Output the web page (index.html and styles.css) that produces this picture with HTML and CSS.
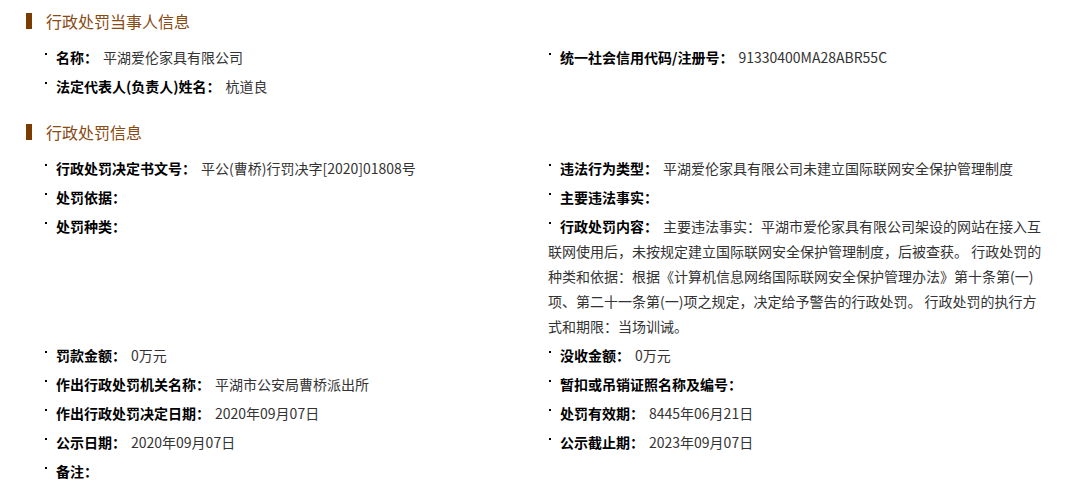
FILE: index.html
```html
<!DOCTYPE html>
<html lang="zh-CN">
<head>
    <meta charset="UTF-8">
    <meta name="viewport" content="width=device-width, initial-scale=1.0">
    <title>行政处罚信息</title>
    <link rel="stylesheet" href="styles.css">
</head>
<body>
    <div class="section">
        <h3 class="section-title">行政处罚当事人信息</h3>
        <div class="info-grid">
            <div class="item"><span class="label">名称：</span><span class="value">平湖爱伦家具有限公司</span></div>
            <div class="item"><span class="label">统一社会信用代码/注册号：</span><span class="value">91330400MA28ABR55C</span></div>
            <div class="item"><span class="label">法定代表人(负责人)姓名：</span><span class="value">杭道良</span></div>
        </div>
    </div>

    <div class="section">
        <h3 class="section-title">行政处罚信息</h3>
        <div class="info-grid">
            <div class="item"><span class="label">行政处罚决定书文号：</span><span class="value">平公(曹桥)行罚决字[2020]01808号</span></div>
            <div class="item"><span class="label">违法行为类型：</span><span class="value">平湖爱伦家具有限公司未建立国际联网安全保护管理制度</span></div>
            <div class="item"><span class="label">处罚依据：</span><span class="value"></span></div>
            <div class="item"><span class="label">主要违法事实：</span><span class="value"></span></div>
            <div class="item"><span class="label">处罚种类：</span><span class="value"></span></div>
            <div class="item"><span class="label">行政处罚内容：</span><span class="value">主要违法事实：平湖市爱伦家具有限公司架设的网站在接入互联网使用后，未按规定建立国际联网安全保护管理制度，后被查获。 行政处罚的种类和依据：根据《计算机信息网络国际联网安全保护管理办法》第十条第(一)项、第二十一条第(一)项之规定，决定给予警告的行政处罚。 行政处罚的执行方式和期限：当场训诫。</span></div>
            <div class="item"><span class="label">罚款金额：</span><span class="value">0万元</span></div>
            <div class="item"><span class="label">没收金额：</span><span class="value">0万元</span></div>
            <div class="item"><span class="label">作出行政处罚机关名称：</span><span class="value">平湖市公安局曹桥派出所</span></div>
            <div class="item"><span class="label">暂扣或吊销证照名称及编号：</span><span class="value"></span></div>
            <div class="item"><span class="label">作出行政处罚决定日期：</span><span class="value">2020年09月07日</span></div>
            <div class="item"><span class="label">处罚有效期：</span><span class="value">8445年06月21日</span></div>
            <div class="item"><span class="label">公示日期：</span><span class="value">2020年09月07日</span></div>
            <div class="item"><span class="label">公示截止期：</span><span class="value">2023年09月07日</span></div>
            <div class="item"><span class="label">备注：</span><span class="value"></span></div>
        </div>
    </div>
</body>
</html>
```

FILE: styles.css
```css
body {
    margin: 0;
    padding: 9px 0 0 0;
    background-color: #fff;
    font-family: "Noto Sans CJK SC", "Noto Sans", sans-serif;
    font-size: 14px;
    color: #333;
}

.section {
    margin-bottom: 17px;
}

.section-title {
    display: flex;
    align-items: center;
    margin: 0 0 12px 26px;
    height: 24px;
    font-size: 16px;
    font-weight: normal;
    color: #8a4a14;
}

.section-title::before {
    content: "";
    width: 6px;
    height: 16px;
    margin-right: 14px;
    background-color: #7a3c00;
}

.info-grid {
    display: grid;
    grid-template-columns: 504px 504px;
    padding-left: 44px;
}

.item {
    line-height: 25px;
    margin-bottom: 4px;
    padding-right: 7px;
}

.item::before {
    content: "";
    display: inline-block;
    width: 2px;
    height: 2px;
    margin-left: 1px;
    margin-right: 9px;
    vertical-align: 8px;
    background-color: #000;
}

.label {
    font-weight: bold;
    color: #000;
}

.value {
    margin-left: 5px;
}
```
